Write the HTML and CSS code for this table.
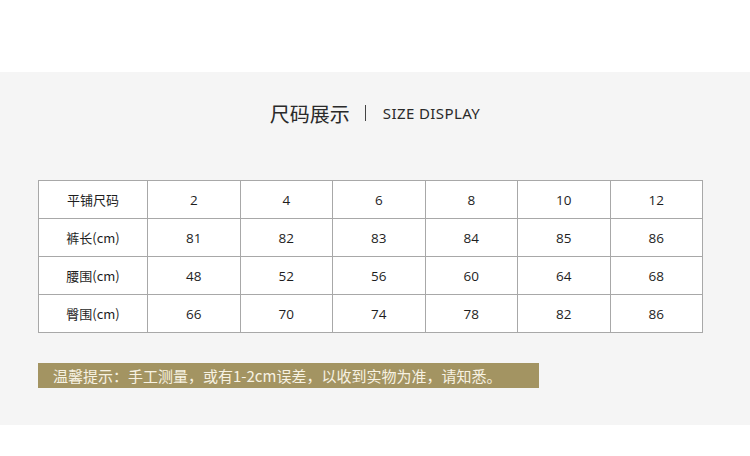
FILE: index.html
```html
<!DOCTYPE html>
<html lang="zh">
<head>
<meta charset="utf-8">
<link rel="stylesheet" href="styles.css">
</head>
<body>
<div class="top"></div>
<section class="band">
  <h1 class="title"><span class="cn">尺码展示</span><span class="sep"></span><span class="en">SIZE DISPLAY</span></h1>
  <table class="size">
    <tr><td class="lbl">平铺尺码</td><td>2</td><td>4</td><td>6</td><td>8</td><td>10</td><td>12</td></tr>
    <tr><td class="lbl">裤长(cm)</td><td>81</td><td>82</td><td>83</td><td>84</td><td>85</td><td>86</td></tr>
    <tr><td class="lbl">腰围(cm)</td><td>48</td><td>52</td><td>56</td><td>60</td><td>64</td><td>68</td></tr>
    <tr><td class="lbl">臀围(cm)</td><td>66</td><td>70</td><td>74</td><td>78</td><td>82</td><td>86</td></tr>
  </table>
  <div class="note">温馨提示：手工测量，或有1-2cm误差，以收到实物为准，请知悉。</div>
</section>
</body>
</html>
```
FILE: styles.css
```css
html, body { margin: 0; padding: 0; background: #fff; }
body { width: 750px; height: 456px; overflow: hidden; font-family: "Noto Sans", "Noto Sans CJK SC", sans-serif; }
.top { height: 72px; }
.band {
  background: #f5f5f5;
  height: 353px;
  padding: 0 46px 0 38px;
  box-sizing: border-box;
  overflow: hidden;
}
.title {
  margin: 0;
  padding: 0 0 26px 8px;
  height: 108px;
  box-sizing: border-box;
  display: flex;
  align-items: center;
  justify-content: center;
  font-weight: normal;
  color: #2a2a2a;
}
.title .cn { font-family: "Noto Sans CJK SC", sans-serif; font-size: 20px; }
.title .sep { width: 1px; height: 16px; background: #444; margin: 0 17px 0 15px; }
.title .en { font-family: "Noto Sans", sans-serif; font-size: 15px; letter-spacing: 0.4px; }
.size {
  border-collapse: collapse;
  background: #fff;
  width: 665px;
  table-layout: fixed;
}
.size td {
  border: 1px solid #a8a8a8;
  height: 37px;
  padding: 0;
  text-align: center;
  font-size: 13.5px;
  color: #1e1e1e;
  font-family: "Open Sans", "Noto Sans CJK SC", sans-serif;
}
.size td.lbl { width: 108px; font-size: 13px; font-family: "Noto Sans CJK SC", sans-serif; }
.note {
  margin-top: 30px;
  width: 501px;
  height: 25px;
  background: #a39462;
  color: #f7f2e2;
  font-size: 15px;
  line-height: 25px;
  padding-left: 15px;
  box-sizing: border-box;
  font-family: "Noto Sans CJK SC", sans-serif;
  white-space: nowrap;
}
```
